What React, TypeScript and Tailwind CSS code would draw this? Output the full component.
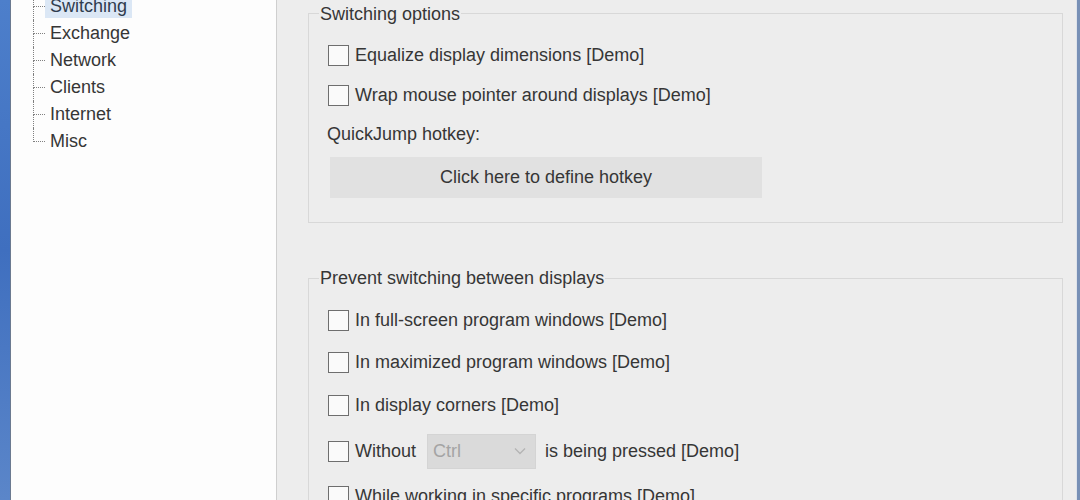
import React from "react";

const font = { fontFamily: '"Liberation Sans", Arial, sans-serif' };

const treeItems = ["Switching", "Exchange", "Network", "Clients", "Internet", "Misc"];

const Checkbox = () => <span className="h-[21px] w-[21px] shrink-0 border-[1.5px] border-[#6e6e6e] bg-[#fafafa]" />;

const CheckRow = ({ label, h }: { label: string; h: string }) => (
  <div className={`flex items-center gap-[6px] pl-[19px] ${h}`}>
    <Checkbox />
    <span>{label}</span>
  </div>
);

const GroupTitle = ({ children, mt }: { children: React.ReactNode; mt: string }) => (
  <div className={`ml-[10px] w-fit bg-[#ededed] px-[1px] leading-[22px] ${mt}`}>{children}</div>
);

export default function App() {
  return (
    <div className="flex h-[500px] w-[1080px] overflow-hidden text-[18px] text-[#363636]" style={font}>
      {/* desktop behind the window */}
      <div className="w-[10px] bg-gradient-to-b from-[#4d7fcb] via-[#3f6fbf] to-[#5b86c9]" />
      <div className="w-px bg-[#6b7a90]" />

      {/* tree */}
      <div className="w-[266px] border-r border-[#cfcfcf] bg-[#fdfdfd] pl-[22px]">
        <div className="-mt-[7px]">
          {treeItems.map((item, i) => {
            const last = i === treeItems.length - 1;
            return (
              <div key={item} className="flex h-[27px] items-center">
                <div className="flex w-[12px] flex-col self-stretch">
                  <div className="h-1/2 border-b border-l border-dotted border-[#808080]" />
                  <div className={`h-1/2 ${last ? "" : "border-l border-dotted border-[#808080]"}`} />
                </div>
                <span className={`flex h-[22px] items-center px-[5px] ${i === 0 ? "bg-[#dbe7f5] text-[#2f3c4e]" : ""}`}>{item}</span>
              </div>
            );
          })}
        </div>
      </div>

      {/* settings page */}
      <div className="flex w-[799px] flex-col bg-[#ededed] pl-[31px] pr-[13px] pt-[13px]">
        <section className="border border-[#d8d8d8] pb-[24px]">
          <GroupTitle mt="-mt-[11px]">Switching options</GroupTitle>
          <div className="mt-[10px]">
            <CheckRow label="Equalize display dimensions [Demo]" h="h-[40px]" />
            <CheckRow label="Wrap mouse pointer around displays [Demo]" h="h-[40px]" />
            <div className="flex h-[38px] items-center pl-[18px]">QuickJump hotkey:</div>
            <button className="ml-[21px] mt-[4px] flex h-[41px] w-[432px] items-center justify-center bg-[#e1e1e1] text-[#363636]">
              Click here to define hotkey
            </button>
          </div>
        </section>

        <section className="mt-[55px] border border-b-0 border-[#d8d8d8]">
          <GroupTitle mt="-mt-[12px]">Prevent switching between displays</GroupTitle>
          <div className="mt-[10px]">
            <CheckRow label="In full-screen program windows [Demo]" h="h-[42px]" />
            <CheckRow label="In maximized program windows [Demo]" h="h-[42px]" />
            <CheckRow label="In display corners [Demo]" h="h-[44px]" />
            <div className="flex h-[48px] items-center pl-[19px]">
              <Checkbox />
              <span className="ml-[6px]">Without</span>
              <div className="ml-[11px] flex h-[35px] w-[109px] items-center justify-between border border-[#d4d4d4] bg-[#dadada] pl-[5px] pr-[9px] text-[#a4a4a4]">
                <span>Ctrl</span>
                <svg width="12" height="8" viewBox="0 0 12 8" fill="none" stroke="#b4b4b4" strokeWidth="1.3">
                  <path d="M1 1.5 6 6.5 11 1.5" />
                </svg>
              </div>
              <span className="ml-[9px]">is being pressed [Demo]</span>
            </div>
            <CheckRow label="While working in specific programs [Demo]" h="h-[42px]" />
          </div>
        </section>
      </div>

      {/* window frame */}
      <div className="w-[4px] border-l border-[#dfe3ea] bg-[#7890b6]" />
    </div>
  );
}
